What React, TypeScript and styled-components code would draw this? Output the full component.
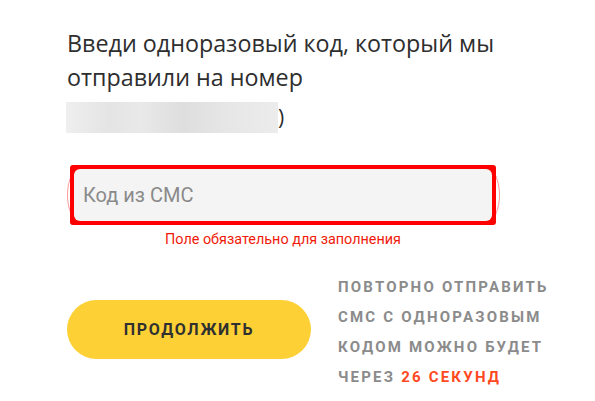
import * as React from 'react'
import styled, { createGlobalStyle } from 'styled-components'

const GlobalStyle = createGlobalStyle`
    html, body {
        margin: 0;
        padding: 0;
        background: #ffffff;
    }
    body {
        font-family: Roboto, 'Liberation Sans', Arial, sans-serif;
    }
`

const Page = styled.div`
    width: 595px;
    height: 401px;
    box-sizing: border-box;
    padding: 26px 0 0 67px;
    overflow: hidden;
`

const Heading = styled.h1`
    margin: 0;
    font-family: 'Open Sans', 'Liberation Sans', Arial, sans-serif;
    font-size: 23.3px;
    line-height: 34px;
    font-weight: 400;
    color: #2e2e2e;
`

const PhoneRow = styled.div`
    display: flex;
    align-items: center;
    margin-top: 8px;
    height: 31px;
`

const BlurredPhone = styled.div`
    width: 212px;
    height: 31px;
    margin-left: -1px;
    background: linear-gradient(
        90deg,
        #efefef 0%,
        #e4e4e4 20%,
        #e9e9e9 35%,
        #dedede 55%,
        #e6e6e6 75%,
        #ececec 100%
    );
`

const PhoneTail = styled.span`
    font-family: 'Open Sans', 'Liberation Sans', Arial, sans-serif;
    font-size: 21px;
    line-height: 31px;
    color: #2e2e2e;
`

const Field = styled.div`
    width: 426px;
    margin-top: 32px;
    margin-left: 3px;
`

const InputFrame = styled.div<{ $invalid?: boolean }>`
    position: relative;
    padding: 4px;
    border-radius: 3px;
    background: ${(p) => (p.$invalid ? '#ff0000' : '#e3e3e3')};

    &::before {
        content: '';
        position: absolute;
        left: -3px;
        right: -4px;
        top: 4px;
        bottom: 4px;
        border: 1px solid transparent;
        border-left-color: rgba(255, 0, 0, 0.4);
        border-right-color: rgba(255, 0, 0, 0.4);
        border-radius: 12px / 26px;
        pointer-events: none;
    }
`

const Input = styled.input`
    display: block;
    width: 100%;
    height: 52px;
    box-sizing: border-box;
    border: none;
    outline: none;
    border-radius: 6px;
    background: #f4f4f4;
    padding: 0 0 0 9px;
    font-family: Roboto, 'Liberation Sans', Arial, sans-serif;
    font-size: 20px;
    color: #333;

    &::placeholder {
        color: #8a8a8a;
    }
`

const ErrorText = styled.div`
    margin-top: 6px;
    text-align: center;
    font-size: 14.4px;
    line-height: 17px;
    color: #f01a0a;
`

const ActionRow = styled.div`
    display: flex;
    align-items: flex-start;
    margin-top: 24px;
    gap: 27px;
`

const ContinueButton = styled.button`
    margin-top: 28px;
    width: 244px;
    height: 59px;
    border: none;
    border-radius: 30px;
    background: #fdd035;
    color: #303030;
    font-family: Roboto, 'Liberation Sans', Arial, sans-serif;
    font-size: 16px;
    font-weight: 700;
    letter-spacing: 1.7px;
    text-transform: uppercase;
    cursor: pointer;
`

const ResendNote = styled.div`
    font-size: 15px;
    line-height: 30px;
    font-weight: 700;
    letter-spacing: 2.2px;
    text-transform: uppercase;
    color: #8b8b8b;
`

const Countdown = styled.span`
    color: #ff4a1f;
`

export default function App() {
    const seconds = 26

    return (
        <>
            <GlobalStyle />
            <Page>
                <Heading>
                    Введи одноразовый код, который мы
                    <br />
                    отправили на номер
                </Heading>
                <PhoneRow>
                    <BlurredPhone />
                    <PhoneTail>)</PhoneTail>
                </PhoneRow>

                <Field>
                    <InputFrame $invalid>
                        <Input placeholder='Код из СМС' />
                    </InputFrame>
                    <ErrorText>Поле обязательно для заполнения</ErrorText>
                </Field>

                <ActionRow>
                    <ContinueButton>Продолжить</ContinueButton>
                    <ResendNote>
                        Повторно отправить
                        <br />
                        смс с одноразовым
                        <br />
                        кодом можно будет
                        <br />
                        через <Countdown>{seconds} секунд</Countdown>
                    </ResendNote>
                </ActionRow>
            </Page>
        </>
    )
}
